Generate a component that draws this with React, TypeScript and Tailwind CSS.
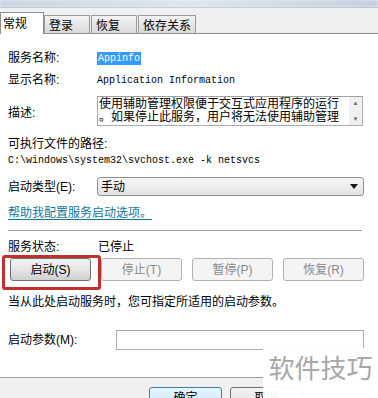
import React from "react";

const cjk = "font-['Liberation_Sans','Noto_Sans_CJK_SC',sans-serif]";
const mono = "font-['Liberation_Mono','Noto_Sans_CJK_SC',monospace]";

const Tab = ({ label, active }: { label: string; active?: boolean }) =>
  active ? (
    <div className="relative z-10 -mb-px flex h-[22px] w-[44px] items-start border border-b-0 border-[#8e8f8f] bg-white pl-[2px] pt-[2px] text-[12px] text-black">
      {label}
    </div>
  ) : (
    <div className="flex h-[18px] items-start border border-b-0 border-[#9a9a9a] bg-gradient-to-b from-[#f4f4f4] to-[#d9d9d9] px-[4px] pt-[1px] text-[12px] text-black">
      {label}
    </div>
  );

const ActionButton = ({ label, disabled }: { label: string; disabled?: boolean }) => (
  <div
    className={
      disabled
        ? "flex h-[23px] w-[81px] items-center justify-center rounded-[3px] border border-[#adb2b5] bg-[#f4f4f4] text-[12px] text-[#8a8a8a]"
        : "flex h-[23px] w-[81px] items-center justify-center rounded-[3px] border border-[#707070] bg-gradient-to-b from-[#f3f3f3] via-[#e6e6e6] to-[#cfcfcf] text-[12px] text-black"
    }
  >
    {label}
  </div>
);

export default function App() {
  return (
    <div className={`relative flex h-[398px] w-[378px] flex-col overflow-hidden bg-[#f0f0f0] ${cjk}`}>
      {/* blurred window top */}
      <div className="h-[7px] bg-gradient-to-r from-[#c9d6e3] via-[#dde6ee] to-[#c3d1df] blur-[1px]" />
      <div className="h-px bg-[#b9c4cf]" />

      {/* tabs */}
      <div className="flex h-[26px] items-end border-b border-[#8e8f8f]">
        <Tab label="常规" active />
        <div className="w-[46px]">
          <Tab label="登录" />
        </div>
        <div className="ml-px w-[46px]">
          <Tab label="恢复" />
        </div>
        <div className="ml-px w-[58px]">
          <Tab label="依存关系" />
        </div>
      </div>

      {/* general panel */}
      <div className="flex flex-1 flex-col bg-white px-[8px] text-[12px] text-black">
        <div className="mt-[17px] flex h-[14px] items-center">
          <div className="w-[89px]">服务名称:</div>
          <span className={`${mono} bg-[#3399ff] px-px text-[10px] leading-[13px] text-white`}>Appinfo</span>
        </div>

        <div className="mt-[8px] flex h-[14px] items-center">
          <div className="w-[89px]">显示名称:</div>
          <span className={`${mono} text-[10px]`}>Application Information</span>
        </div>

        <div className="mt-[9px] flex">
          <div className="w-[89px] pt-[8px]">描述:</div>
          <div className="flex h-[30px] w-[266px] border border-[#abadb3] border-t-[#a0a0a0]">
            <div className="flex-1 overflow-hidden pl-[1px] pt-[1px] text-[12px] leading-[13px]">
              <div className="whitespace-nowrap">使用辅助管理权限便于交互式应用程序的运行</div>
              <div className="whitespace-nowrap">。如果停止此服务，用户将无法使用辅助管理</div>
            </div>
            <div className="flex w-[13px] flex-col items-center justify-between bg-[#f0f0f0] py-[3px] text-[6px] leading-[6px] text-[#666]">
              <span>▲</span>
              <span>▼</span>
            </div>
          </div>
        </div>

        <div className="mt-[11px] flex h-[14px] items-center">可执行文件的路径:</div>
        <div className={`${mono} mt-[3px] flex h-[12px] items-center text-[10px]`}>
          C:\windows\system32\svchost.exe -k netsvcs
        </div>

        <div className="mt-[11px] flex items-center">
          <div className="w-[89px]">启动类型(E):</div>
          <div className="flex h-[19px] w-[267px] items-center justify-between rounded-[3px] border border-[#8e8f8f] bg-gradient-to-b from-[#f6f6f6] to-[#e3e3e3] pl-[3px] pr-[5px]">
            <span>手动</span>
            <svg width="8" height="5" viewBox="0 0 8 5">
              <path d="M0 0 H8 L4 5 Z" fill="#1a1a1a" />
            </svg>
          </div>
        </div>

        <div className="mt-[10px] flex h-[14px] items-center">
          <span className="text-[#13759a] underline underline-offset-2">帮助我配置服务启动选项。</span>
        </div>

        <div className="mt-[10px] mr-[8px] h-px bg-[#a0a0a0]" />

        <div className="mt-[9px] flex h-[14px] items-center">
          <div className="w-[90px]">服务状态:</div>
          <span>已停止</span>
        </div>

        <div className="mt-[4px] flex gap-[10px] pl-[2px]">
          <ActionButton label="启动(S)" />
          <ActionButton label="停止(T)" disabled />
          <ActionButton label="暂停(P)" disabled />
          <ActionButton label="恢复(R)" disabled />
        </div>

        <div className="mt-[14px] flex h-[14px] items-center whitespace-nowrap">
          当从此处启动服务时，您可指定所适用的启动参数。
        </div>

        <div className="mt-[21px] flex items-center">
          <div className="w-[108px]">启动参数(M):</div>
          <div className="h-[20px] w-[248px] border border-[#abadb3] border-t-[#a0a0a0] bg-white" />
        </div>
      </div>

      <div className="h-px bg-[#a0a0a0]" />

      {/* dialog buttons */}
      <div className="flex h-[20px] items-start gap-[8px] pl-[149px] pt-[9px] text-[12px]">
        <div className="flex h-[23px] w-[73px] items-start justify-center rounded-[3px] border border-[#3c7fb1] bg-gradient-to-b from-[#eaf6fd] to-[#bee6fd] pt-[1px]">
          确定
        </div>
        <div className="flex h-[23px] w-[73px] items-start justify-center rounded-[3px] border border-[#707070] bg-gradient-to-b from-[#f3f3f3] to-[#dddddd] pt-[1px]">
          取消
        </div>
      </div>

      {/* red highlight around the start button */}
      <div className="absolute left-[2px] top-[255px] h-[35px] w-[99px] rounded-[3px] border-[3px] border-[#c0302d]" />

      {/* watermark */}
      <div className="absolute left-[263px] top-[348px] flex h-[50px] w-[115px] items-start justify-center bg-white/95 pt-[6px] text-[26px] leading-[30px] text-[#a8a8a8]">
        软件技巧
      </div>
    </div>
  );
}
